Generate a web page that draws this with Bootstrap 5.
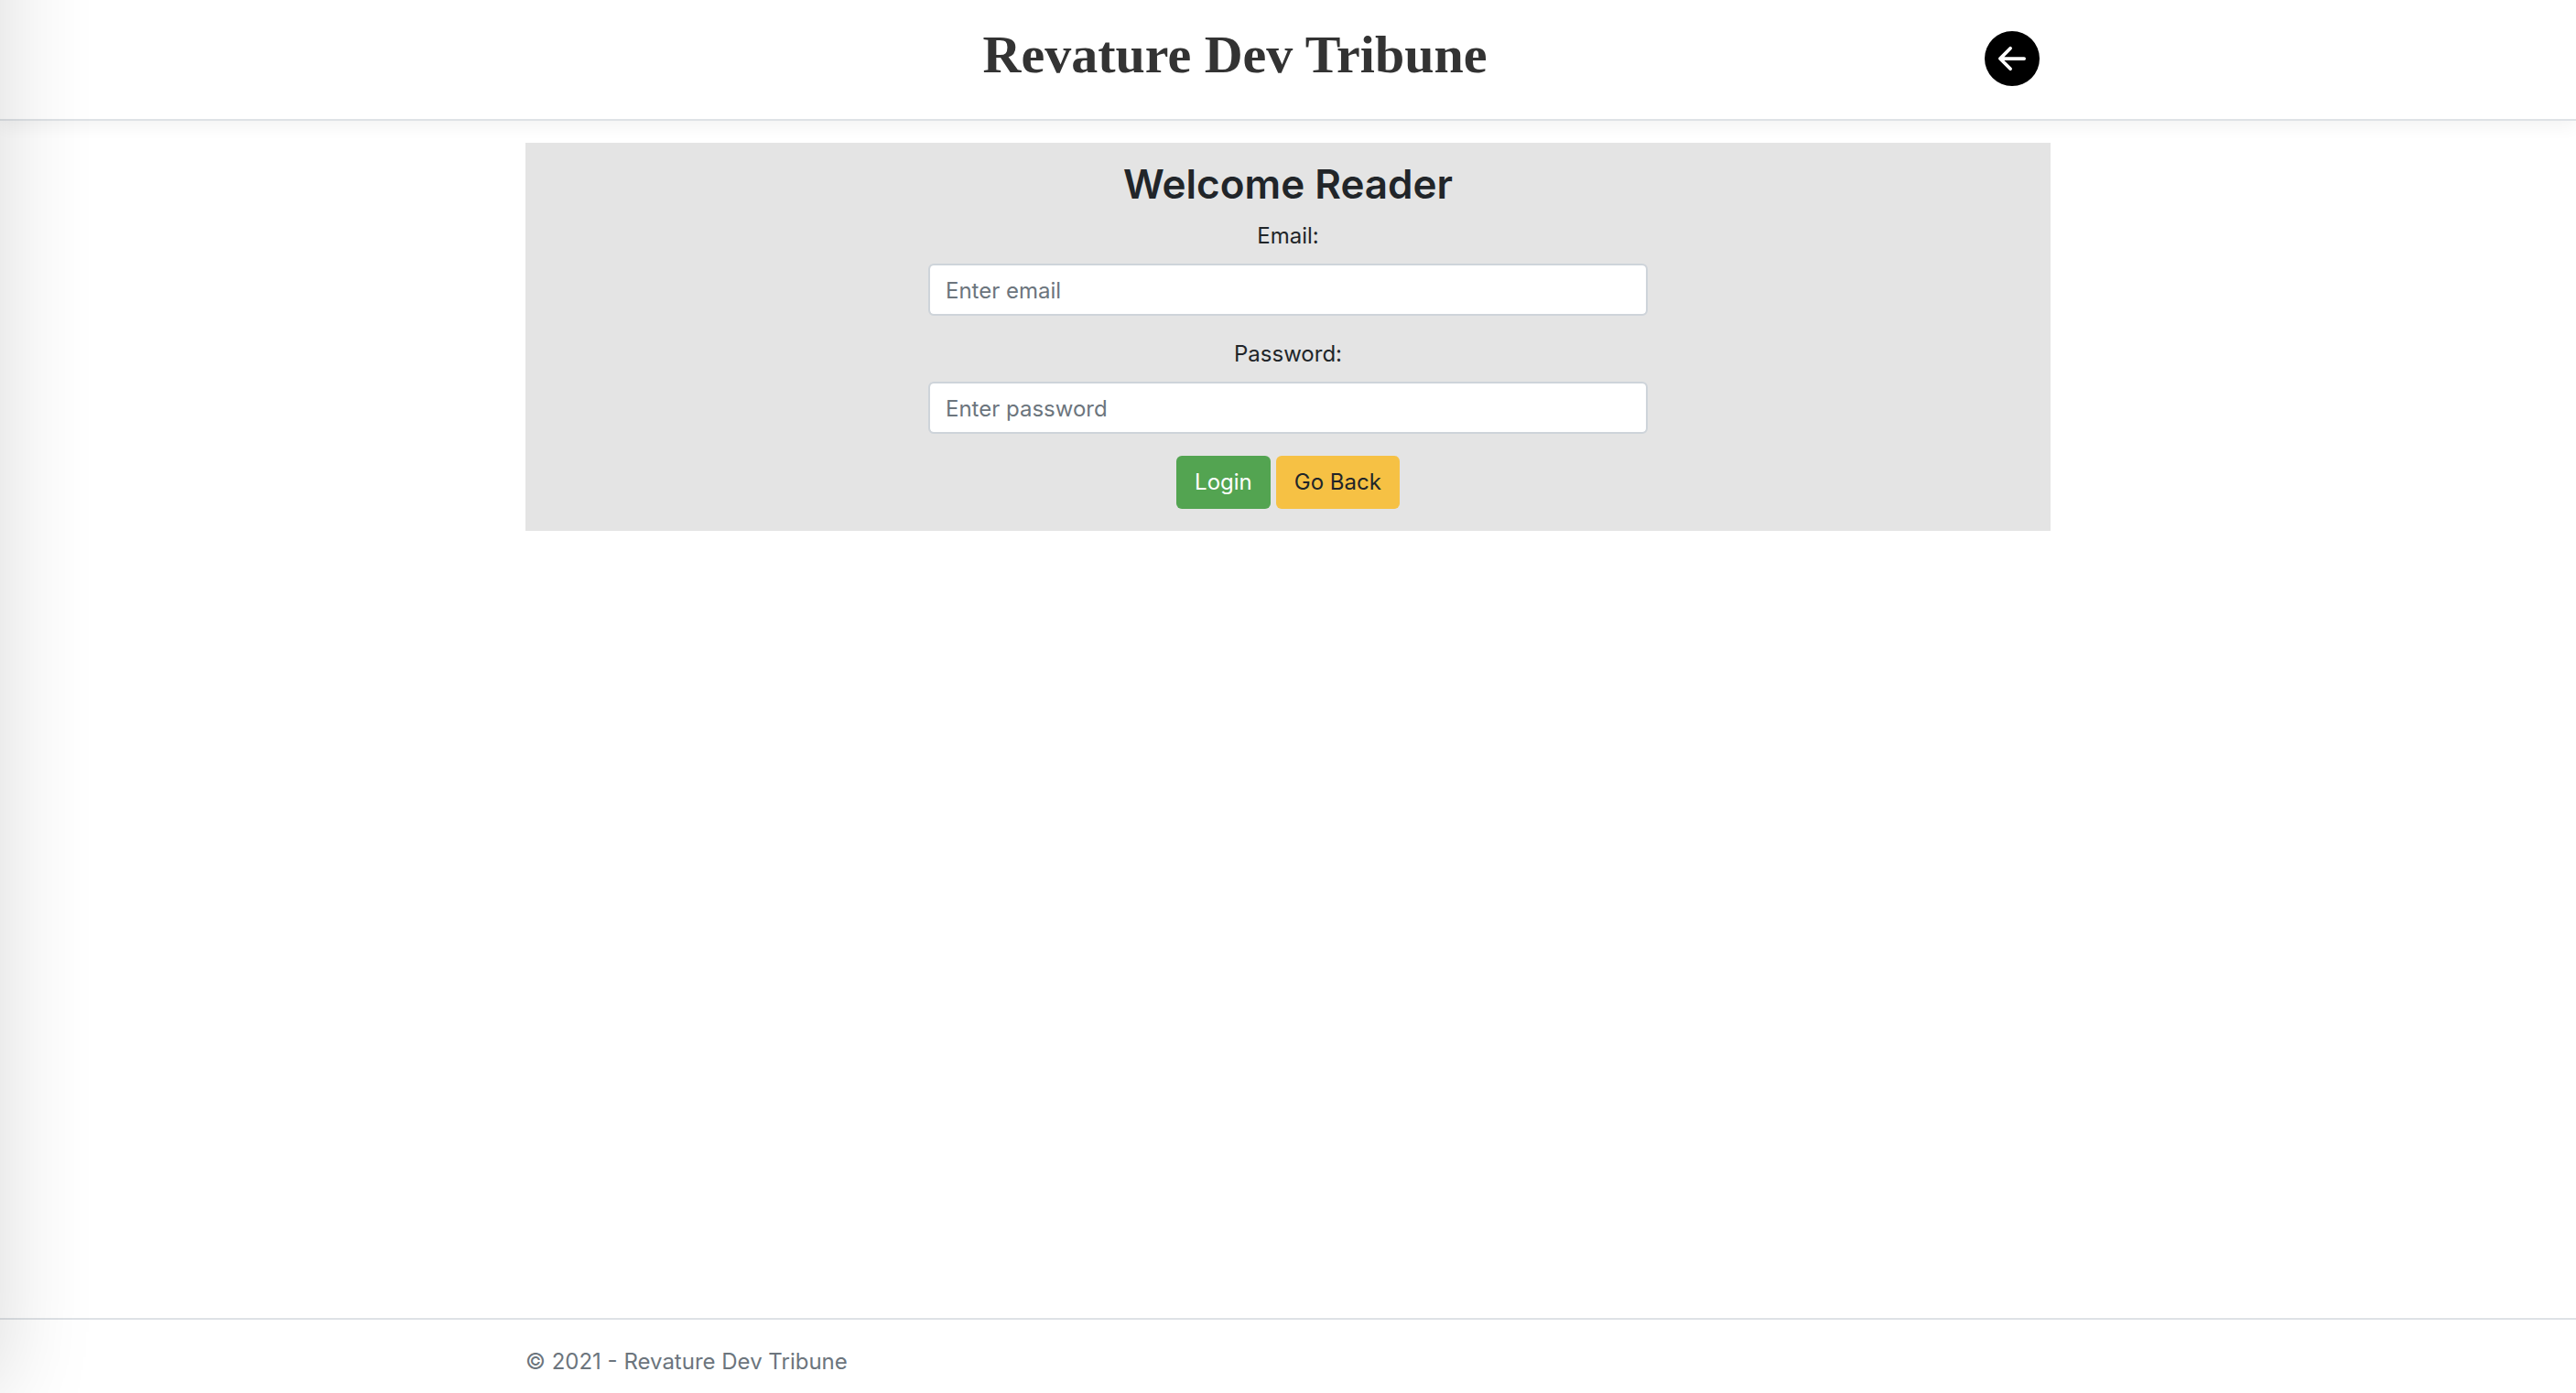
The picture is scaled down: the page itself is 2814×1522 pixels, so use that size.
<!DOCTYPE html>
<html lang="en">
<head>
<meta charset="utf-8">
<meta name="viewport" content="width=device-width, initial-scale=1">
<title>Revature Dev Tribune</title>
<link href="https://cdn.jsdelivr.net/npm/bootstrap@5.3.0/dist/css/bootstrap.min.css" rel="stylesheet">
<style>
  html { font-size: 24px; }
  body { font-family: Inter, "Open Sans", sans-serif; color: #212529; background: #fff; }
  .page-width { width: 100%; max-width: 1714px; padding: 0 24px; margin: 0 auto; }
  .site-header { border-bottom: 2px solid #dee2e6; box-shadow: 0 6px 18px rgba(0, 0, 0, .05); }
  .site-header .page-width { min-height: 130px; padding-bottom: 2px; }
  .masthead { display: block; font-family: "Liberation Serif", serif; font-weight: 700; font-size: 58px; line-height: 64px; padding-bottom: 8px; color: #333; text-decoration: none; }
  .back-link { color: #000; padding: 0 12px 0 44px; }
  .back-link svg { display: block; width: 60px; height: 60px; }
  .login-panel { background: #e4e4e4; padding: 16px 24px 24px; }
  .login-panel h1 { font-size: 44px; line-height: 58px; font-weight: 600; margin-bottom: 10px; }
  .login-form { width: 100%; max-width: 786px; }
  .login-panel .form-label { margin-bottom: 12px; }
  .login-panel .form-control { border: 2px solid #ced4da; border-radius: 6px; height: 57px; padding: 9px 17px 8px; }
  .login-panel .form-control::placeholder { color: #6c757d; }
  .login-buttons { gap: 6px; }
  .login-panel .btn { border-width: 2px; border-radius: 6px; padding: 9px 18px; line-height: 36px; }
  .btn-login, .btn-login:hover { background: #53a451; color: #fff; }
  .btn-back, .btn-back:hover { background: #f6c144; color: #212529; }
  .site-footer { border-top: 2px solid #dee2e6; color: #6c757d; padding: 28px 0 16px; }
  /* closed drawer: only its shadow reaches into the page */
  .side-drawer { position: fixed; top: -200px; bottom: 0; left: -300px; width: 300px; box-shadow: 0 0 96px rgba(0, 0, 0, .15); pointer-events: none; z-index: 10; }
</style>
</head>
<body class="d-flex flex-column min-vh-100">
<div class="side-drawer" aria-hidden="true"></div>
<header class="site-header">
  <div class="page-width d-flex align-items-center">
    <div class="flex-grow-1 text-center"><a class="masthead" href="#">Revature Dev Tribune</a></div>
    <a class="back-link" href="#" aria-label="Back">
      <svg viewBox="0 0 16 16" fill="currentColor" aria-hidden="true"><path d="M8 0a8 8 0 1 0 0 16A8 8 0 0 0 8 0zm3.5 7.5a.5.5 0 0 1 0 1H5.707l2.147 2.146a.5.5 0 0 1-.708.708l-3-3a.5.5 0 0 1 0-.708l3-3a.5.5 0 1 1 .708.708L5.707 7.5H11.5z"/></svg>
    </a>
  </div>
</header>
<main class="page-width flex-grow-1">
  <section class="login-panel text-center mt-3 d-flex flex-column align-items-center">
    <h1>Welcome Reader</h1>
    <form class="login-form">
      <div class="mb-3">
        <label class="form-label" for="email">Email:</label>
        <input class="form-control" type="email" id="email" placeholder="Enter email">
      </div>
      <div class="mb-3">
        <label class="form-label" for="password">Password:</label>
        <input class="form-control" type="password" id="password" placeholder="Enter password">
      </div>
      <div class="login-buttons d-flex justify-content-center">
        <button class="btn btn-login" type="submit">Login</button>
        <button class="btn btn-back" type="button">Go Back</button>
      </div>
    </form>
  </section>
</main>
<footer class="site-footer">
  <div class="page-width">© 2021 - Revature Dev Tribune</div>
</footer>
<script src="https://cdn.jsdelivr.net/npm/bootstrap@5.3.0/dist/js/bootstrap.bundle.min.js"></script>
</body>
</html>
